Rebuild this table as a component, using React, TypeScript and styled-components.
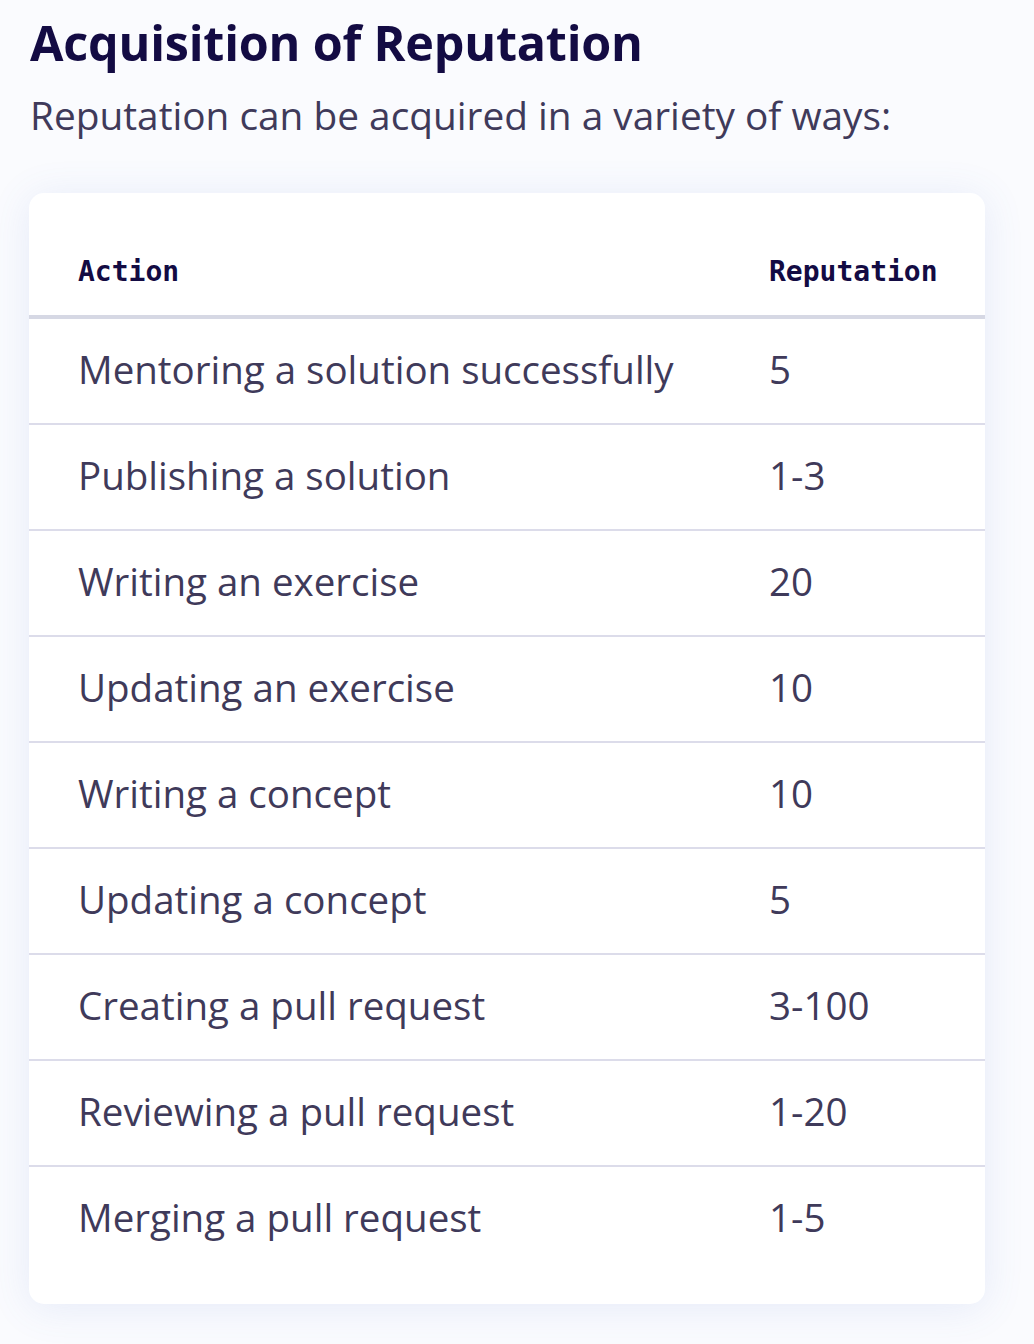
import React from "react";
import styled, { createGlobalStyle } from "styled-components";

const Global = createGlobalStyle`
  html, body { margin: 0; padding: 0; background: #fafbfe; }
  body { font-family: "Open Sans", "Noto Sans", sans-serif; }
`;

const Page = styled.main`
  padding: 12px 49px 40px 30px;
  width: 1034px;
  box-sizing: border-box;
`;

const Title = styled.h2`
  margin: 0;
  font-family: "Open Sans", sans-serif;
  font-weight: 700;
  font-size: 48.5px;
  line-height: 60px;
  color: #130b43;
  letter-spacing: -0.2px;
`;

const Lead = styled.p`
  margin: 18px 0 0;
  font-family: "Open Sans", sans-serif;
  font-size: 38.8px;
  line-height: 50px;
  color: #3f3a5a;
`;

const Card = styled.div`
  margin-top: 53px;
  margin-left: -1px;
  background: #ffffff;
  border-radius: 15px;
  box-shadow: 0 4px 40px rgba(79, 114, 205, 0.12);
  padding-bottom: 33px;
  overflow: hidden;
`;

const Table = styled.table`
  width: 100%;
  border-collapse: collapse;
  table-layout: fixed;
`;

const HeadCell = styled.th<{ $first?: boolean }>`
  text-align: left;
  font-family: "DejaVu Sans Mono", monospace;
  font-weight: 700;
  font-size: 28px;
  line-height: 40px;
  color: #130b43;
  padding: 59px 0 23px ${(p) => (p.$first ? "49px" : "0")};
  border-bottom: 4px solid #d6d8e4;
`;

const Row = styled.tr`
  & + & {
    border-top: 2px solid #dcdcea;
  }
`;

const Cell = styled.td<{ $first?: boolean }>`
  height: 100px;
  padding: 0 0 4px ${(p) => (p.$first ? "49px" : "0")};
  font-family: "Open Sans", sans-serif;
  font-size: 38.5px;
  color: #3f3a5a;
  vertical-align: middle;
  white-space: nowrap;
`;

const rows: [string, string][] = [
  ["Mentoring a solution successfully", "5"],
  ["Publishing a solution", "1-3"],
  ["Writing an exercise", "20"],
  ["Updating an exercise", "10"],
  ["Writing a concept", "10"],
  ["Updating a concept", "5"],
  ["Creating a pull request", "3-100"],
  ["Reviewing a pull request", "1-20"],
  ["Merging a pull request", "1-5"],
];

export default function App() {
  return (
    <>
      <Global />
      <Page>
        <Title>Acquisition of Reputation</Title>
        <Lead>Reputation can be acquired in a variety of ways:</Lead>
        <Card>
          <Table>
            <colgroup>
              <col style={{ width: "740px" }} />
              <col />
            </colgroup>
            <thead>
              <tr>
                <HeadCell $first>Action</HeadCell>
                <HeadCell>Reputation</HeadCell>
              </tr>
            </thead>
            <tbody>
              {rows.map(([a, r]) => (
                <Row key={a}>
                  <Cell $first>{a}</Cell>
                  <Cell>{r}</Cell>
                </Row>
              ))}
            </tbody>
          </Table>
        </Card>
      </Page>
    </>
  );
}
